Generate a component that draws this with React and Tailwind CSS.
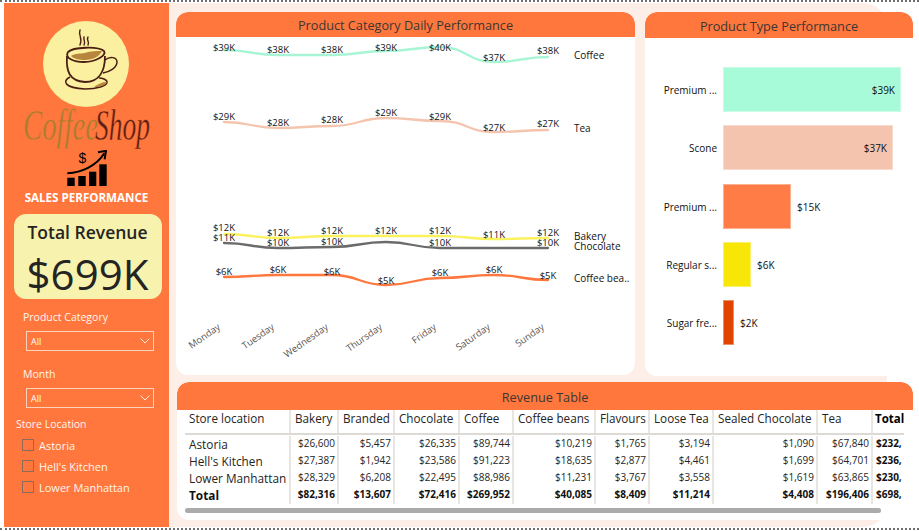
import React from "react";

const sans = "font-['Open_Sans','Noto_Sans',sans-serif]";

const days = ["Monday", "Tuesday", "Wednesday", "Thursday", "Friday", "Saturday", "Sunday"];
const xs = [224, 278, 332, 386, 440, 494, 548];

// y values are page pixels, the chart's viewBox is lined up with the page
const series = [
  {
    name: "Coffee",
    color: "#A8F5D6",
    legendY: 55,
    ys: [50, 55, 55, 51, 47, 62, 57],
    labels: ["$39K", "$38K", "$38K", "$39K", "$40K", "$37K", "$38K"],
    labelYs: [47, 49, 49, 47, 47, 57, 50],
  },
  {
    name: "Tea",
    color: "#F5C4AE",
    legendY: 128,
    ys: [122, 128, 126, 118, 121, 132, 130],
    labels: ["$29K", "$28K", "$28K", "$29K", "$29K", "$27K", "$27K"],
    labelYs: [116, 122, 119, 112, 116, 127, 123],
  },
  {
    name: "Bakery",
    color: "#FBF25E",
    legendY: 236,
    ys: [234, 238, 236, 236, 236, 239, 238],
    labels: ["$12K", "$12K", "$12K", "$12K", "$12K", "$11K", "$12K"],
    labelYs: [227, 232, 230, 230, 230, 234, 232],
  },
  {
    name: "Chocolate",
    color: "#6B6B6B",
    legendY: 246,
    ys: [243, 248, 247, 242, 248, 248, 248],
    labels: ["$11K", "$10K", "$10K", "", "$10K", "", "$10K"],
    labelYs: [237, 242, 241, 0, 242, 0, 242],
  },
  {
    name: "Coffee bea..",
    color: "#FF773D",
    legendY: 278,
    ys: [277, 275, 275, 285, 278, 275, 280],
    labels: ["$6K", "$6K", "$6K", "$5K", "$6K", "$6K", "$5K"],
    labelYs: [271, 269, 271, 280, 272, 269, 275],
  },
];

const bars = [
  { name: "Premium ...", value: "$39K", width: "w-[178px]", color: "bg-[#A8FBD9]", inside: true },
  { name: "Scone", value: "$37K", width: "w-[170px]", color: "bg-[#F5C4AE]", inside: true },
  { name: "Premium ...", value: "$15K", width: "w-[68px]", color: "bg-[#FF7C46]" },
  { name: "Regular s...", value: "$6K", width: "w-[28px]", color: "bg-[#F8E608]" },
  { name: "Sugar fre...", value: "$2K", width: "w-[11px]", color: "bg-[#E04400]" },
];

const columns = [
  { name: "Store location", width: "w-[106px]" },
  { name: "Bakery", width: "w-[48px]" },
  { name: "Branded", width: "w-[56px]" },
  { name: "Chocolate", width: "w-[65px]" },
  { name: "Coffee", width: "w-[54px]" },
  { name: "Coffee beans", width: "w-[82px]" },
  { name: "Flavours", width: "w-[54px]" },
  { name: "Loose Tea", width: "w-[64px]" },
  { name: "Sealed Chocolate", width: "w-[104px]" },
  { name: "Tea", width: "w-[55px]" },
  { name: "Total", width: "w-[31px]" },
];

const rows = [
  ["Astoria", "$26,600", "$5,457", "$26,335", "$89,744", "$10,219", "$1,765", "$3,194", "$1,090", "$67,840", "$232,"],
  ["Hell's Kitchen", "$27,387", "$1,942", "$23,586", "$91,223", "$18,635", "$2,877", "$4,461", "$1,699", "$64,701", "$236,"],
  ["Lower Manhattan", "$28,329", "$6,208", "$22,495", "$88,986", "$11,231", "$3,767", "$3,558", "$1,619", "$63,865", "$230,"],
];
const totals = ["Total", "$82,316", "$13,607", "$72,416", "$269,952", "$40,085", "$8,409", "$11,214", "$4,408", "$196,406", "$698,"];

// smooth line through the points, roughly what the chart draws
const smooth = (ys) => {
  let d = `M${xs[0]} ${ys[0]}`;
  for (let i = 1; i < xs.length; i++) {
    const mid = (xs[i - 1] + xs[i]) / 2;
    d += ` C${mid} ${ys[i - 1]} ${mid} ${ys[i]} ${xs[i]} ${ys[i]}`;
  }
  return d;
};

const Logo = () => (
  <svg viewBox="0 0 165 150" className="h-[150px] w-[165px] shrink-0">
    <circle cx="82" cy="60" r="43" fill="#FBF0A0" />
    {/* steam */}
    <path d="M76 26c-2 5 3 8 0 15M80 33c-1 3 2 5 0 8M84 33c-2 3 2 5 0 8" fill="none" stroke="#4A1E12" strokeWidth="1.4" strokeLinecap="round" />
    {/* cup */}
    <path d="M63 52c-1 15 2 25 18 26 15 0 20-12 20-26" fill="none" stroke="#4A1E12" strokeWidth="1.8" />
    <path d="M64 48c5-5 30-6 36-1 3 4-8 11-20 11-10 0-20-4-16-10z" fill="#FBF0A0" stroke="#4A1E12" strokeWidth="1.8" />
    <path d="M67 52c4-3 9-2 14-3 6-2 13-2 17-2-2 5-9 9-17 9-6 0-11-1-14-4z" fill="#B8853C" />
    <path d="M101 56c5-4 12-3 12 2 0 6-8 10-14 11" fill="none" stroke="#4A1E12" strokeWidth="1.5" />
    {/* saucer */}
    <path d="M66 73c-8 4-6 11 15 12 12 0 22-3 22-7 0-2-4-4-8-4" fill="none" stroke="#4A1E12" strokeWidth="1.6" />
    <path d="M90 83c4-3 8-5 13-5-1 3-6 5-13 5z" fill="#B8853C" />
    {/* stroke in the sidebar colour thins the letters down to the logo's light script */}
    <text x="19" y="136" fontFamily="Liberation Serif, serif" fontStyle="italic" fontSize="44" fill="#A47E30" stroke="#FF773D" strokeWidth="0.55" textLength="75" lengthAdjust="spacingAndGlyphs">Coffee</text>
    <text x="91" y="136" fontFamily="Liberation Serif, serif" fontStyle="italic" fontSize="44" fill="#5A1F14" stroke="#FF773D" strokeWidth="0.45" textLength="55" lengthAdjust="spacingAndGlyphs">Shop</text>
  </svg>
);

const GrowthIcon = () => (
  <svg viewBox="0 0 41 38" className="-mt-[4px] h-[38px] w-[41px] shrink-0">
    <rect x="1.3" y="27.7" width="7.4" height="8.3" />
    <rect x="12.3" y="26" width="7.4" height="10" />
    <rect x="23" y="21.7" width="7.3" height="14.3" />
    <rect x="33.3" y="14.3" width="7.4" height="21.7" />
    <path d="M1.3 23.3c14-1 29-7 37-20" fill="none" stroke="#000" strokeWidth="2" />
    <path d="M32 2.2l8-1.4-1.4 8.5" fill="none" stroke="#000" strokeWidth="2" />
    <text x="16.3" y="13" textAnchor="middle" fontSize="14" fontFamily="Liberation Sans, sans-serif" fill="#000">$</text>
  </svg>
);

const SelectBox = () => (
  <div className="ml-[22px] flex h-[20px] w-[128px] items-center justify-between border border-[#FAD3BD] pl-[4px] pr-[3px] text-[9px] text-white">
    <span className="pt-[2px]">All</span>
    <svg viewBox="0 0 10 6" className="h-[6px] w-[10px]">
      <path d="M0.5 0.5L5 5l4.5-4.5" fill="none" stroke="#FFF0E6" strokeWidth="1" />
    </svg>
  </div>
);

const Sidebar = () => (
  <aside className="flex w-[165px] shrink-0 flex-col items-center bg-[#FF773D] pt-[1px]">
    <Logo />
    <GrowthIcon />
    <div className="mt-[2px] text-[11.6px] font-bold leading-[16px] text-white">SALES PERFORMANCE</div>
    <div className="ml-[2px] mt-[8px] flex h-[85px] w-[148px] flex-col items-center rounded-[12px] bg-[#F7F2AE] text-[#252423]">
      <div className="mt-[5px] text-[17.5px] font-semibold leading-[26px]">Total Revenue</div>
      <div className="mt-[3px] text-[42px] leading-[52px]">$699K</div>
    </div>
    <div className="mt-[10px] w-full pl-[19px] text-[10.5px] leading-[16px] text-[#FFF5EC]">Product Category</div>
    <div className="mt-[6px] w-full"><SelectBox /></div>
    <div className="mt-[15px] w-full pl-[19px] text-[10.5px] leading-[16px] text-[#FFF5EC]">Month</div>
    <div className="mt-[6px] w-full"><SelectBox /></div>
    <div className="mt-[8px] w-full pl-[12px] text-[10.5px] leading-[16px] text-[#FFF5EC]">Store Location</div>
    <div className="mt-[7px] flex w-full flex-col gap-[9px] pl-[18px]">
      {["Astoria", "Hell's Kitchen", "Lower Manhattan"].map((name) => (
        <div key={name} className="flex h-[12px] items-center gap-[5px] text-[11px] text-[#FFF5EC]">
          <span className="h-[12px] w-[12px] shrink-0 border border-[#8F6A58]" />
          <span className="pt-[2px]">{name}</span>
        </div>
      ))}
    </div>
  </aside>
);

const PanelHeader = ({ title, className }) => (
  <div className={`flex shrink-0 items-center justify-center rounded-t-[12px] bg-[#FF773D] pt-[3px] text-[12.7px] text-[#3B3632] ${className}`}>
    {title}
  </div>
);

const LineChart = () => (
  <svg viewBox="176 37 459 338" className="h-[338px] w-[459px]">
    {series.map((s) => (
      <g key={s.name}>
        <path d={smooth(s.ys)} fill="none" stroke={s.color} strokeWidth="2.3" strokeLinecap="round" />
        {s.labels.map((label, i) =>
          label ? (
            <text key={i} x={xs[i]} y={s.labelYs[i] + 4} textAnchor="middle" fontSize="9.5" fill="#111" fontFamily="Open Sans, sans-serif">
              {label}
            </text>
          ) : null
        )}
        <text x="574" y={s.legendY + 3.5} fontSize="10" fill="#111" fontFamily="Open Sans, sans-serif">
          {s.name}
        </text>
      </g>
    ))}
    {days.map((day, i) => (
      <text
        key={day}
        transform={`translate(${xs[i] - 3} 328.5) rotate(-35)`}
        textAnchor="end"
        fontSize="9.5"
        fill="#555"
        fontFamily="Open Sans, sans-serif"
      >
        {day}
      </text>
    ))}
  </svg>
);

const BarChart = () => (
  <div className="flex flex-col gap-[13.3px] pt-[29px]">
    {bars.map((b, i) => (
      <div key={i} className="flex h-[45px] items-center text-[10px] text-[#111]">
        <div className="w-[72px] shrink-0 pt-[2px] text-right">{b.name}</div>
        <div className={`ml-[6px] flex h-full shrink-0 items-center justify-end border border-white/40 pr-[5px] ${b.width} ${b.color}`}>
          {b.inside && <span className="pt-[2px]">{b.value}</span>}
        </div>
        {!b.inside && <span className="ml-[6px] pt-[2px]">{b.value}</span>}
      </div>
    ))}
  </div>
);

const Cell = ({ col, bold, left, last, children }) => (
  <div
    className={`flex shrink-0 items-center overflow-hidden whitespace-nowrap ${col.width} ${
      left ? "pl-[4px] text-[11.8px]" : "pb-[2px] text-[10px]"
    } ${last ? "pl-[3px]" : "border-r-2 border-[#E9E6E2]"} ${!left && !last ? "justify-end pr-[2px]" : ""} ${
      bold || last ? "font-bold text-[#111]" : "text-[#252423]"
    }`}
  >
    {children}
  </div>
);

const RevenueTable = () => (
  <div className="ml-[8px] mr-[9px] flex flex-col">
    <div className="flex h-[25px] border-b-2 border-[#DDDAD6]">
      {columns.map((c) => (
        <div
          key={c.name}
          className={`flex shrink-0 items-start overflow-hidden whitespace-nowrap text-[#252423] ${c.width} ${
            c.name === "Total"
              ? "pl-[2px] text-[11.5px] font-bold text-black"
              : "border-r-2 border-[#E9E6E2] pl-[4px] text-[11.7px]"
          }`}
        >
          {c.name}
        </div>
      ))}
    </div>
    <div className="flex flex-col pt-[1px]">
      {rows.map((row) => (
        <div key={row[0]} className="flex h-[17px]">
          {row.map((v, i) => (
            <Cell key={i} col={columns[i]} left={i === 0} last={i === 10}>{v}</Cell>
          ))}
        </div>
      ))}
      <div className="flex h-[17px]">
        {totals.map((v, i) => (
          <Cell key={i} col={columns[i]} left={i === 0} last={i === 10} bold>{v}</Cell>
        ))}
      </div>
    </div>
    <div className="mt-[4px] h-[5px] w-[696px] rounded-full bg-[#ABABAB]" />
  </div>
);

export default function App() {
  return (
    <div className={`flex h-[531px] w-[919px] flex-col overflow-hidden bg-white ${sans}`}>
      <div className="h-[3px] shrink-0 border-t-2 border-dotted border-[#6E6E6E]" />
      <div className="flex h-[524px] shrink-0 pl-[4px]">
        <Sidebar />
        <main className="relative flex-1 pl-[7px] pr-[6px] pt-[9px]">
          {/* pale page shape behind the panels */}
          <div className="absolute inset-y-0 left-0 w-[718px] rounded-r-[24px] bg-[#FEEEE8]" />
          <div className="relative flex gap-[10px]">
            <section className="flex h-[363px] w-[459px] flex-col overflow-hidden rounded-[12px] bg-white">
              <PanelHeader title="Product Category Daily Performance" className="h-[25px]" />
              <LineChart />
            </section>
            <section className="flex h-[364px] w-[268px] flex-col overflow-hidden rounded-[12px] bg-white">
              <PanelHeader title="Product Type Performance" className="h-[26px]" />
              <BarChart />
            </section>
          </div>
          <section className="relative ml-[1px] mt-[6px] flex h-[138px] w-[736px] flex-col overflow-hidden rounded-[12px] bg-white">
            <PanelHeader title="Revenue Table" className="h-[28px]" />
            <RevenueTable />
          </section>
        </main>
      </div>
      <div className="h-[3px] shrink-0 border-b-2 border-dotted border-[#6E6E6E]" />
    </div>
  );
}
